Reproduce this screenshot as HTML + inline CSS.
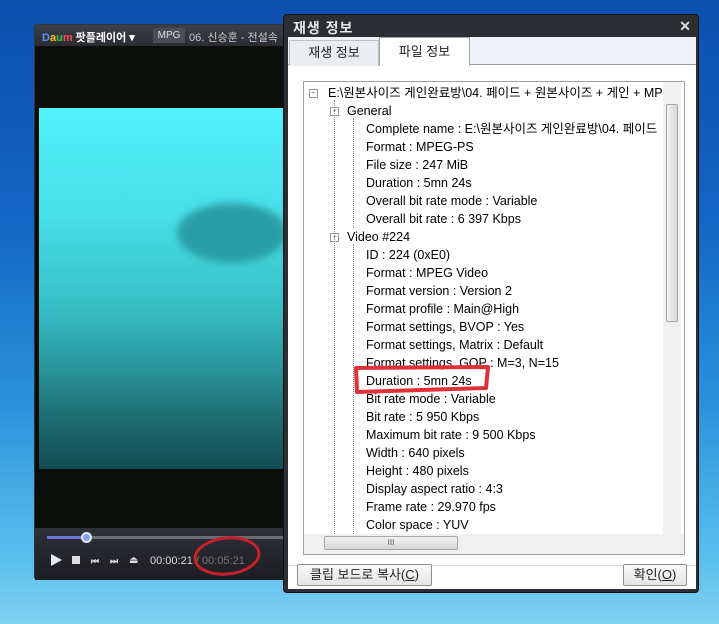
<!DOCTYPE html>
<html><head><meta charset="utf-8"><style>
*{margin:0;padding:0;box-sizing:border-box}
body{width:719px;height:624px;overflow:hidden;position:relative;font-family:"Liberation Sans","Noto Sans CJK KR",sans-serif;
background:linear-gradient(180deg,#0d4fae 0%,#1366c4 35%,#2a93db 65%,#5cc0ee 90%,#7fd0f0 100%);}
.abs{position:absolute}
#player{left:34px;top:24px;width:253px;height:556px;background:#0c0e0c;border:1px solid #333;border-radius:3px}
#ptitle{left:0;top:0;width:100%;height:21px;background:linear-gradient(#3c3f47,#2a2c32);color:#fff;font-size:11px}
#video{left:4px;top:83px;width:245px;height:361px;background:linear-gradient(180deg,#52f2fb 0%,#47dfe8 30%,#37bfc6 55%,#2a9aa0 70%,#1e6f74 85%,#124c50 100%)}
#ctrl{left:0;top:503px;width:100%;height:52px;background:linear-gradient(#2e3038,#1c1d22)}
#dlg{left:283px;top:14px;width:416px;height:579px;background:#2b2e33;border-radius:4px;border:1px solid #111}
#dt{left:9px;top:3px;color:#e8e8e8;font-size:14px;font-weight:bold;letter-spacing:1px}
#body{left:4px;top:22px;width:408px;height:552px;background:#fff}
#tabs{left:0;top:0;width:100%;height:28px;background:#eef2f7;border-bottom:1px solid #a0a0a0}
.tab{top:3px;height:26px;font-size:13px;color:#222;text-align:center;line-height:24px}
#tree{left:15px;top:44px;width:382px;height:474px;border:1px solid #a0a0a0;background:#fff;overflow:hidden}
.r{position:absolute;font-size:12.5px;color:#000;white-space:nowrap;line-height:14px}
.btn{height:22px;border:1px solid #8e8e8e;border-radius:2px;background:linear-gradient(#fafafa,#e4e4e4);font-size:13px;text-align:center;line-height:20px;color:#222}
</style></head><body>

<div id="player" class="abs">
 <div id="ptitle" class="abs">
  <span class="abs" style="left:7px;top:4px;font-weight:bold;font-size:11px"><span style="color:#5a8cff">D</span><span style="color:#ffc400">a</span><span style="color:#37c24a">u</span><span style="color:#ff4d4d">m</span> 팟플레이어 ▾</span>
  <span class="abs" style="left:118px;top:3px;width:32px;height:15px;background:#4a4d55;color:#ddd;font-size:10px;text-align:center;line-height:15px">MPG</span>
  <span class="abs" style="left:154px;top:4px;color:#ccc;font-size:11px">06. 신승훈 - 전설속</span>
 </div>
 <div id="video" class="abs">
  <div class="abs" style="left:138px;top:95px;width:110px;height:60px;border-radius:50%;background:#2a9ea6;filter:blur(4px)"></div>
 </div>
 <div id="ctrl" class="abs">
  <div class="abs" style="left:12px;top:8px;width:240px;height:3px;background:#6a6c72"></div>
  <div class="abs" style="left:12px;top:8px;width:40px;height:3px;background:#6a78d8"></div>
  <div class="abs" style="left:46px;top:4px;width:11px;height:11px;border-radius:50%;background:#8aa0f0;border:2px solid #e0e6ff"></div>
  <div class="abs" style="left:16px;top:26px;width:0;height:0;border-left:11px solid #e8e8f0;border-top:6px solid transparent;border-bottom:6px solid transparent"></div>
  <div class="abs" style="left:37px;top:28px;width:8px;height:8px;background:#ddd"></div>
  <div class="abs" style="left:56px;top:28px;color:#ddd;font-size:9px;font-weight:bold">⏮</div>
  <div class="abs" style="left:75px;top:28px;color:#ddd;font-size:9px;font-weight:bold">⏭</div>
  <div class="abs" style="left:94px;top:27px;color:#ddd;font-size:10px">⏏</div>
  <div class="abs" style="left:115px;top:27px;color:#ddd;font-size:11px">00:00:21 <span style="color:#777">/ 00:05:21</span></div>
 </div>
</div>
<svg class="abs" style="left:190px;top:532px" width="80" height="50"><ellipse cx="37" cy="24" rx="32" ry="18" fill="none" stroke="#c8202a" stroke-width="3" transform="rotate(-6 37 24)"/></svg>

<div id="dlg" class="abs">
 <div id="dt" class="abs">재생 정보</div>
 <div class="abs" style="right:7px;top:3px;color:#ddd;font-size:14px;font-weight:bold">✕</div>
 <div id="body" class="abs">
  <div id="tabs" class="abs">
   <div class="tab abs" style="left:1px;width:90px;background:#eaeef3;border:1px solid #c0c0c0;border-bottom:none">재생 정보</div>
   <div class="tab abs" style="left:91px;width:91px;top:0;height:29px;background:#fff;border:1px solid #a0a0a0;border-bottom:none;line-height:28px">파일 정보</div>
  </div>
  <div id="tree" class="abs">
   <div class="abs" style="left:30px;top:18px;height:434px;border-left:1px dotted #888"></div>
   <div class="abs" style="left:49px;top:36px;height:110px;border-left:1px dotted #888"></div>
   <div class="abs" style="left:49px;top:162px;height:290px;border-left:1px dotted #888"></div>
   <div class="abs" style="left:5px;top:7px;width:9px;height:9px;border:1px solid #999;font-size:8px;line-height:6px;text-align:center">-</div>
   <div class="abs" style="left:26px;top:25px;width:9px;height:9px;border:1px solid #999;font-size:8px;line-height:6px;text-align:center">-</div>
   <div class="abs" style="left:26px;top:151px;width:9px;height:9px;border:1px solid #999;font-size:8px;line-height:6px;text-align:center">-</div>
   <div class="r" style="left:24px;top:4px">E:\원본사이즈 게인완료방\04. 페이드 + 원본사이즈 + 게인 + MP</div>
   <div class="r" style="left:43px;top:22px">General</div>
   <div class="r" style="left:62px;top:40px">Complete name : E:\원본사이즈 게인완료방\04. 페이드</div>
   <div class="r" style="left:62px;top:58px">Format : MPEG-PS</div>
   <div class="r" style="left:62px;top:76px">File size : 247 MiB</div>
   <div class="r" style="left:62px;top:94px">Duration : 5mn 24s</div>
   <div class="r" style="left:62px;top:112px">Overall bit rate mode : Variable</div>
   <div class="r" style="left:62px;top:130px">Overall bit rate : 6 397 Kbps</div>
   <div class="r" style="left:43px;top:148px">Video #224</div>
   <div class="r" style="left:62px;top:166px">ID : 224 (0xE0)</div>
   <div class="r" style="left:62px;top:184px">Format : MPEG Video</div>
   <div class="r" style="left:62px;top:202px">Format version : Version 2</div>
   <div class="r" style="left:62px;top:220px">Format profile : Main@High</div>
   <div class="r" style="left:62px;top:238px">Format settings, BVOP : Yes</div>
   <div class="r" style="left:62px;top:256px">Format settings, Matrix : Default</div>
   <div class="r" style="left:62px;top:274px">Format settings, GOP : M=3, N=15</div>
   <div class="r" style="left:62px;top:292px">Duration : 5mn 24s</div>
   <div class="r" style="left:62px;top:310px">Bit rate mode : Variable</div>
   <div class="r" style="left:62px;top:328px">Bit rate : 5 950 Kbps</div>
   <div class="r" style="left:62px;top:346px">Maximum bit rate : 9 500 Kbps</div>
   <div class="r" style="left:62px;top:364px">Width : 640 pixels</div>
   <div class="r" style="left:62px;top:382px">Height : 480 pixels</div>
   <div class="r" style="left:62px;top:400px">Display aspect ratio : 4:3</div>
   <div class="r" style="left:62px;top:418px">Frame rate : 29.970 fps</div>
   <div class="r" style="left:62px;top:436px">Color space : YUV</div>
   <div class="abs" style="left:359px;top:0;width:18px;height:452px;background:#f0f0f0"></div>
   <div class="abs" style="left:362px;top:22px;width:12px;height:218px;background:linear-gradient(90deg,#f2f2f2,#d8d8d8);border:1px solid #a8a8a8;border-radius:2px"></div>
   <div class="abs" style="left:0;top:452px;width:380px;height:22px;background:#f0f0f0"></div>
   <div class="abs" style="left:20px;top:454px;width:134px;height:14px;background:linear-gradient(#f2f2f2,#d6d6d6);border:1px solid #a8a8a8;border-radius:2px;font-size:8px;text-align:center;line-height:12px;color:#555">III</div>
  </div>
  <div class="abs" style="left:0;top:528px;width:100%;border-top:1px solid #ddd"></div>
  <div class="btn abs" style="left:9px;top:527px;width:135px">클립 보드로 복사(<u>C</u>)</div>
  <div class="btn abs" style="left:335px;top:527px;width:64px">확인(<u>O</u>)</div>
 </div>
</div>
<svg class="abs" style="left:350px;top:362px" width="145" height="34"><path d="M6 6 L138 5 L136 26 L7 30 Z" fill="none" stroke="#e0303a" stroke-width="4" stroke-linejoin="round"/></svg>
</body></html>
